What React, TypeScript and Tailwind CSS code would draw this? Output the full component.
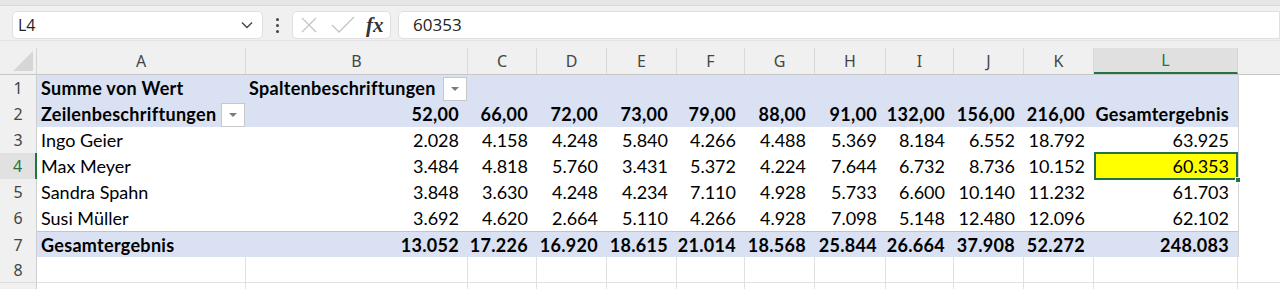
import React from "react";

const cols = ["A", "B", "C", "D", "E", "F", "G", "H", "I", "J", "K", "L"];
const heads = ["52,00", "66,00", "72,00", "73,00", "79,00", "88,00", "91,00", "132,00", "156,00", "216,00"];
const data: [string, string[]][] = [
  ["Ingo Geier", ["2.028", "4.158", "4.248", "5.840", "4.266", "4.488", "5.369", "8.184", "6.552", "18.792", "63.925"]],
  ["Max Meyer", ["3.484", "4.818", "5.760", "3.431", "5.372", "4.224", "7.644", "6.732", "8.736", "10.152", "60.353"]],
  ["Sandra Spahn", ["3.848", "3.630", "4.248", "4.234", "7.110", "4.928", "5.733", "6.600", "10.140", "11.232", "61.703"]],
  ["Susi Müller", ["3.692", "4.620", "2.664", "5.110", "4.266", "4.928", "7.098", "5.148", "12.480", "12.096", "62.102"]],
];
const totals = ["13.052", "17.226", "16.920", "18.615", "21.014", "18.568", "25.844", "26.664", "37.908", "52.272", "248.083"];

const GRID = "grid grid-cols-[37px_209px_222px_69px_70px_70px_68px_70px_71px_68px_70px_70px_144px_1fr]";
const cellFont = "font-['Lato',sans-serif] text-[18px] text-black";
const boldFont = "font-['Lato',sans-serif] text-[18px] text-black font-bold tracking-[0.3px]";
const hdrFont = "font-['Noto_Sans',sans-serif] text-[16px]";

function DropBtn() {
  return (
    <div className="w-[24px] h-[24px] mr-[1px] bg-white border border-[#c8c8c8] flex items-center justify-center shrink-0">
      <svg width="10" height="6" viewBox="0 0 10 6">
        <path d="M1 1 L9 1 L5 5 Z" fill="#7a7a7a" />
      </svg>
    </div>
  );
}

function RowHead({ n, sel = false }: { n?: number; sel?: boolean }) {
  return (
    <div
      className={`${hdrFont} flex items-center justify-center border-b border-[#dcdcdc] ${
        sel
          ? "bg-[#e1e1e1] text-[#217346] border-r-2 border-r-[#217346]"
          : "bg-[#f0f0f0] text-[#444] border-r border-r-[#cfcfcf]"
      }`}
    >
      {n}
    </div>
  );
}

function Tail() {
  return <div className="bg-white border-b border-[#e1e1e1] border-l border-l-[#d4d4d4]" />;
}

export default function App() {
  return (
    <div className="w-[1280px] h-[289px] overflow-hidden bg-[#f0f0f0] select-none">
      {/* top strip */}
      <div className="h-[6px] bg-[#e6e6e6] border-b border-[#dadada]" />
      {/* formula bar */}
      <div className="h-[34px] flex items-center pt-[4px]">
        <div className="ml-[12px] w-[251px] h-[28px] bg-white border border-[#e0e0e0] rounded-[5px] flex items-center justify-between pl-[5px] pr-[9px]">
          <span className="font-['Open_Sans',sans-serif] text-[16px] text-[#222]">L4</span>
          <svg width="12" height="8" viewBox="0 0 12 8">
            <path d="M1 1.5 L6 6.5 L11 1.5" stroke="#444" strokeWidth="1.4" fill="none" />
          </svg>
        </div>
        <div className="w-[29px] flex flex-col items-center gap-[3px]">
          <div className="w-[3px] h-[3px] rounded-full bg-[#444]" />
          <div className="w-[3px] h-[3px] rounded-full bg-[#444]" />
          <div className="w-[3px] h-[3px] rounded-full bg-[#444]" />
        </div>
        <div className="w-[99px] h-[28px] bg-white border border-[#e0e0e0] rounded-[5px] flex items-center pl-[7px]">
          <svg width="18" height="18" viewBox="0 0 18 18">
            <path d="M2 2 L16 16 M16 2 L2 16" stroke="#c4c4c4" strokeWidth="1.3" />
          </svg>
          <svg width="24" height="18" viewBox="0 0 24 18" className="ml-[13px]">
            <path d="M1 9 L8 16 L23 1" stroke="#c4c4c4" strokeWidth="1.3" fill="none" />
          </svg>
          <span className="ml-[11px] font-['Liberation_Serif',serif] italic font-bold text-[21px] text-[#333] leading-none">
            fx
          </span>
        </div>
        <div className="ml-[7px] flex-1 h-[28px] bg-white border border-[#e0e0e0] rounded-l-[5px] flex items-center pl-[14px]">
          <span className="font-['Open_Sans',sans-serif] text-[17px] text-[#222]">60353</span>
        </div>
      </div>
      <div className="h-[8px] border-t border-[#e3e3e3]" />
      {/* column headers */}
      <div className={`${GRID} h-[27px] border-b border-[#c6c6c6]`}>
        <div className="relative bg-[#f0f0f0] border-r border-[#d4d4d4]">
          <svg width="22" height="22" viewBox="0 0 22 22" className="absolute left-[12px] top-[2px]">
            <path d="M21 1 L21 21 L1 21 Z" fill="#d6d6d6" />
          </svg>
        </div>
        {cols.map((c) =>
          c === "L" ? (
            <div
              key={c}
              className={`${hdrFont} flex items-center justify-center bg-[#e0e0e0] text-[#217346] border-r border-[#d4d4d4] border-b-2 border-b-[#217346]`}
            >
              {c}
            </div>
          ) : (
            <div key={c} className={`${hdrFont} flex items-center justify-center text-[#444] border-r border-[#d9d9d9]`}>
              {c}
            </div>
          )
        )}
        <div className="bg-[#f0f0f0]" />
      </div>

      {/* row 1 */}
      <div className={`${GRID} h-[26px]`}>
        <RowHead n={1} />
        <div className={`${boldFont} bg-[#d9e1f2] flex items-center pl-[4px]`}>Summe von Wert</div>
        <div className={`${boldFont} bg-[#d9e1f2] flex items-center justify-between pl-[3px]`}>
          <span>Spaltenbeschriftungen</span>
          <DropBtn />
        </div>
        {Array.from({ length: 10 }).map((_, i) => (
          <div key={i} className="bg-[#d9e1f2]" />
        ))}
        <Tail />
      </div>

      {/* row 2 */}
      <div className={`${GRID} h-[26px]`}>
        <RowHead n={2} />
        <div className={`${boldFont} bg-[#d9e1f2] flex items-center justify-between pl-[4px]`}>
          <span>Zeilenbeschriftungen</span>
          <DropBtn />
        </div>
        {heads.map((h) => (
          <div key={h} className={`${boldFont} bg-[#d9e1f2] flex items-center justify-end pr-[9px]`}>
            {h}
          </div>
        ))}
        <div className={`${boldFont} bg-[#d9e1f2] flex items-center justify-end pr-[9px]`}>Gesamtergebnis</div>
        <Tail />
      </div>

      {/* data rows */}
      {data.map(([name, vals], ri) => (
        <div key={name} className={`${GRID} h-[26px]`}>
          <RowHead n={ri + 3} sel={ri === 1} />
          <div className={`${cellFont} bg-white flex items-center pl-[4px]`}>{name}</div>
          {vals.map((v, vi) =>
            ri === 1 && vi === 10 ? (
              <div key={vi} className={`${cellFont} relative bg-[#ffff00] flex items-center justify-end pr-[9px]`}>
                {v}
                <div className="absolute inset-0 -top-[1px] border-2 border-[#217346]" />
                <div className="absolute -right-[3px] -bottom-[3px] w-[6px] h-[6px] bg-[#217346] border border-white" />
              </div>
            ) : (
              <div key={vi} className={`${cellFont} bg-white flex items-center justify-end pr-[9px]`}>
                {v}
              </div>
            )
          )}
          <Tail />
        </div>
      ))}

      {/* row 7 */}
      <div className={`${GRID} h-[26px]`}>
        <RowHead n={7} />
        <div className={`${boldFont} bg-[#d9e1f2] border-t border-[#b4c6e7] flex items-center pl-[4px]`}>
          Gesamtergebnis
        </div>
        {totals.map((t, i) => (
          <div
            key={i}
            className={`${boldFont} bg-[#d9e1f2] border-t border-[#b4c6e7] flex items-center justify-end pr-[9px]`}
          >
            {t}
          </div>
        ))}
        <Tail />
      </div>

      {/* rows 8, 9 */}
      {[8, 9].map((n) => (
        <div key={n} className={`${GRID} h-[26px]`}>
          <RowHead n={n === 8 ? 8 : undefined} />
          {cols.map((c) => (
            <div key={c} className="bg-white border-r border-b border-[#e1e1e1]" />
          ))}
          <div className="bg-white border-b border-[#e1e1e1]" />
        </div>
      ))}
    </div>
  );
}
